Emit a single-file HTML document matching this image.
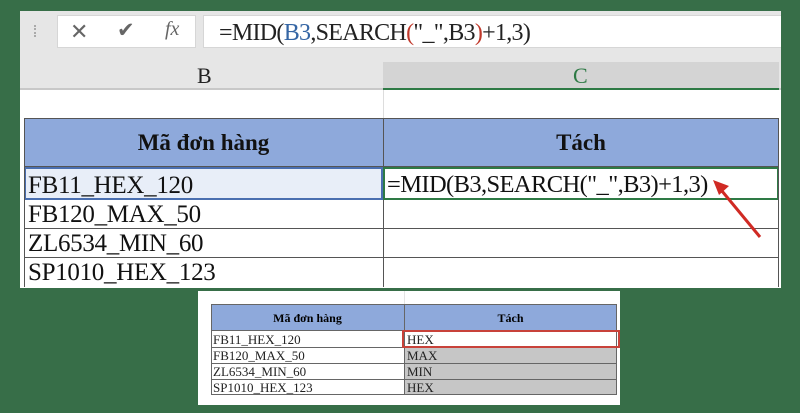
<!DOCTYPE html>
<html><head><style>
body{margin:0;width:800px;height:413px;background:#376e48;position:relative;overflow:hidden;font-family:"Liberation Serif",serif}
.a{position:absolute;box-sizing:border-box}
</style></head><body>
<div class="a" style="left:20px;top:11px;width:761px;height:277px;background:#fff"></div>
<div class="a" style="left:20px;top:11px;width:761px;height:79px;background:#e6e6e6"></div>
<div class="a" style="left:34px;top:25px;width:3px;height:12px;border-left:2px dotted #aaa"></div>
<div class="a" style="left:57px;top:15px;width:139px;height:33px;background:#fff;border:1px solid #d6d6d6"></div>
<div class="a" style="left:70px;top:19px;font:22px 'Liberation Sans',sans-serif;color:#666">✕</div>
<div class="a" style="left:117px;top:18px;font:21px 'DejaVu Sans',sans-serif;color:#666">✔</div>
<div class="a" style="left:165px;top:18px;font:italic 20px 'Liberation Serif',serif;color:#666">fx</div>
<div class="a" style="left:203px;top:15px;width:578px;height:33px;background:#fff;border:1px solid #d6d6d6;border-right:none"></div>
<div class="a" style="left:219px;top:20px;font:24px 'Liberation Serif',serif;color:#222;letter-spacing:-0.7px">=MID(<span style="color:#3465a4">B3</span>,SEARCH<span style="color:#c0392b">(</span>"_",B3<span style="color:#c0392b">)</span>+1,3)</div>
<div class="a" style="left:20px;top:62px;width:761px;height:28px;border-bottom:2px solid #c8c8c8"></div>
<div class="a" style="left:383px;top:62px;width:396px;height:28px;background:#d4d4d4;border-bottom:2px solid #2e7a45"></div>
<div class="a" style="left:197px;top:63px;font:22px 'Liberation Serif',serif;color:#222">B</div>
<div class="a" style="left:573px;top:63px;font:22px 'Liberation Serif',serif;color:#2e7a45">C</div>
<div class="a" style="left:383px;top:90px;width:1px;height:28px;background:#ddd"></div>
<div class="a" style="left:24px;top:118px;width:755px;height:49px;background:#8ea9db;border:1px solid #555"></div>
<div class="a" style="left:383px;top:118px;width:1px;height:169px;background:#555"></div>
<div class="a" style="left:24px;top:130px;width:359px;text-align:center;font:bold 23px 'Liberation Serif',serif;color:#111">Mã đơn hàng</div>
<div class="a" style="left:383px;top:130px;width:396px;text-align:center;font:bold 23px 'Liberation Serif',serif;color:#111">Tách</div>
<div class="a" style="left:24px;top:167px;width:359px;height:33px;background:#e8eef8;border:2px solid #4a6fb0"></div>
<div class="a" style="left:383px;top:167px;width:396px;height:33px;border:2px solid #2e7a45"></div>
<div class="a" style="left:24px;top:228px;width:755px;height:1px;background:#555"></div>
<div class="a" style="left:24px;top:257px;width:755px;height:1px;background:#555"></div>
<div class="a" style="left:24px;top:167px;width:1px;height:120px;background:#555"></div>
<div class="a" style="left:778px;top:167px;width:1px;height:120px;background:#555"></div>
<div class="a" style="left:28px;top:171px;font:25px 'Liberation Serif',serif;color:#111;letter-spacing:-0.3px;line-height:29px">FB11_HEX_120<br>FB120_MAX_50<br>ZL6534_MIN_60<br>SP1010_HEX_123</div>
<div class="a" style="left:387px;top:171px;font:24.5px 'Liberation Serif',serif;color:#111;letter-spacing:-0.6px">=MID(B3,SEARCH("_",B3)+1,3)</div>
<svg class="a" style="left:708px;top:176px" width="60" height="66"><line x1="52" y1="61" x2="9" y2="9" stroke="#d02a24" stroke-width="3"/><polygon points="5,4 21,10 11,19" fill="#d02a24"/></svg>

<div class="a" style="left:198px;top:291px;width:422px;height:114px;background:#fff"></div>
<div class="a" style="left:404px;top:291px;width:1px;height:14px;background:#e4e4e4"></div>
<div class="a" style="left:211px;top:304px;width:406px;height:27px;background:#8ea9db;border:1px solid #666"></div>
<div class="a" style="left:404px;top:304px;width:1px;height:91px;background:#666"></div>
<div class="a" style="left:211px;top:311px;width:193px;text-align:center;font:bold 12px 'Liberation Serif',serif">Mã đơn hàng</div>
<div class="a" style="left:404px;top:311px;width:213px;text-align:center;font:bold 12px 'Liberation Serif',serif">Tách</div>
<div class="a" style="left:405px;top:347px;width:212px;height:48px;background:#c6c6c6"></div>
<div class="a" style="left:211px;top:331px;width:406px;height:64px;border:1px solid #666;border-top:none"></div>
<div class="a" style="left:211px;top:347px;width:406px;height:1px;background:#666"></div>
<div class="a" style="left:211px;top:363px;width:406px;height:1px;background:#666"></div>
<div class="a" style="left:211px;top:379px;width:406px;height:1px;background:#666"></div>
<div class="a" style="left:402px;top:330px;width:218px;height:18px;border:2px solid #c8423a"></div>
<div class="a" style="left:213px;top:332px;font:13px 'Liberation Serif',serif;line-height:16px;color:#222">FB11_HEX_120<br>FB120_MAX_50<br>ZL6534_MIN_60<br>SP1010_HEX_123</div>
<div class="a" style="left:407px;top:332px;font:13px 'Liberation Serif',serif;line-height:16px;color:#222">HEX<br>MAX<br>MIN<br>HEX</div>
</body></html>
